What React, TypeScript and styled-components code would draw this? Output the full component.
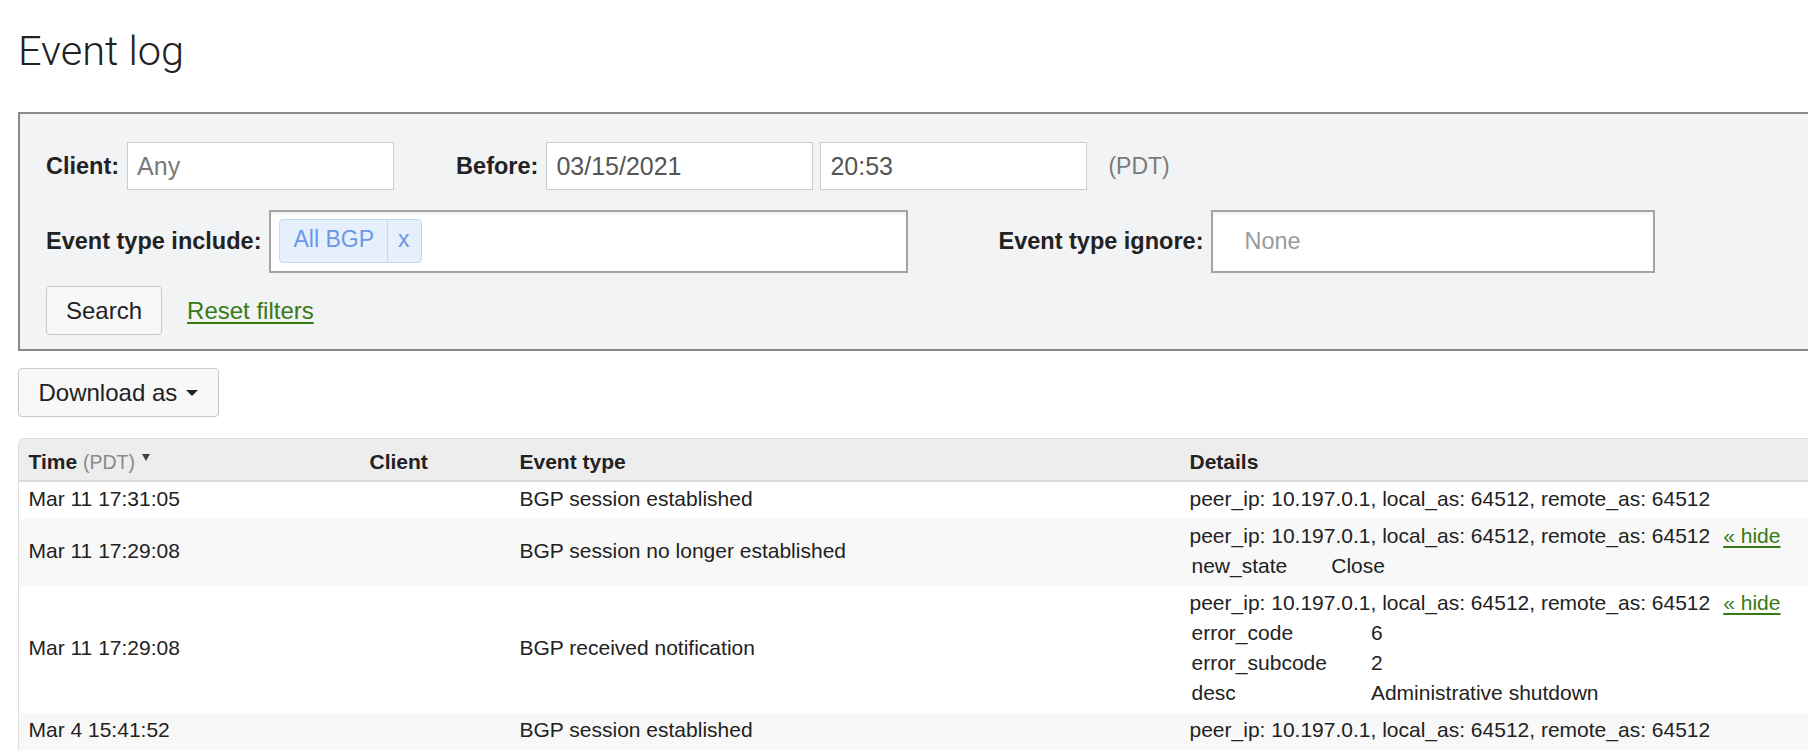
import React from "react"
import styled, { createGlobalStyle } from "styled-components"

interface KV {
  key: string
  value: string
}

interface EventRow {
  time: string
  client: string
  type: string
  details: string
  extra?: KV[]
}

const events: EventRow[] = [
  {
    time: "Mar 11 17:31:05",
    client: "",
    type: "BGP session established",
    details: "peer_ip: 10.197.0.1, local_as: 64512, remote_as: 64512",
  },
  {
    time: "Mar 11 17:29:08",
    client: "",
    type: "BGP session no longer established",
    details: "peer_ip: 10.197.0.1, local_as: 64512, remote_as: 64512",
    extra: [{ key: "new_state", value: "Close" }],
  },
  {
    time: "Mar 11 17:29:08",
    client: "",
    type: "BGP received notification",
    details: "peer_ip: 10.197.0.1, local_as: 64512, remote_as: 64512",
    extra: [
      { key: "error_code", value: "6" },
      { key: "error_subcode", value: "2" },
      { key: "desc", value: "Administrative shutdown" },
    ],
  },
  {
    time: "Mar 4 15:41:52",
    client: "",
    type: "BGP session established",
    details: "peer_ip: 10.197.0.1, local_as: 64512, remote_as: 64512",
  },
]

const App = () => {
  return (
    <>
      <GlobalStyle />
      <Page>
        <Title>Event log</Title>

        <FilterPanel>
          <FilterRow>
            <Label>Client:</Label>
            <TextInput placeholder="Any" readOnly />
            <Label $offset="62px">Before:</Label>
            <TextInput defaultValue="03/15/2021" readOnly />
            <TextInput defaultValue="20:53" readOnly $offset="7px" />
            <Muted>(PDT)</Muted>
          </FilterRow>

          <FilterRow $top="19.5px">
            <Label>Event type include:</Label>
            <TagBox $width="639px">
              <Tag>
                <TagLabel>All BGP</TagLabel>
                <TagRemove>x</TagRemove>
              </Tag>
            </TagBox>
            <Label $offset="90px">Event type ignore:</Label>
            <TagBox $width="444px">
              <Placeholder>None</Placeholder>
            </TagBox>
          </FilterRow>

          <FilterRow $top="13.5px">
            <Button>Search</Button>
            <GreenLink href="#">Reset filters</GreenLink>
          </FilterRow>
        </FilterPanel>

        <Button $top="17px" $pad="19.5px">
          Download as
          <Caret />
        </Button>

        <TableFrame>
          <Table>
            <colgroup>
              <col style={{ width: "341px" }} />
              <col style={{ width: "150px" }} />
              <col style={{ width: "670px" }} />
              <col />
            </colgroup>
            <thead>
              <tr>
                <Th>
                  Time <HeadNote>(PDT)</HeadNote>
                  <SortMark />
                </Th>
                <Th>Client</Th>
                <Th>Event type</Th>
                <Th>Details</Th>
              </tr>
            </thead>
            <tbody>
              {events.map((ev, i) => (
                <Tr key={i} $striped={i % 2 === 1}>
                  <Td>{ev.time}</Td>
                  <Td>{ev.client}</Td>
                  <Td>{ev.type}</Td>
                  <DetailTd>
                    <div>
                      {ev.details}
                      {ev.extra && <HideLink href="#">« hide</HideLink>}
                    </div>
                    {ev.extra && (
                      <KVTable>
                        <tbody>
                          {ev.extra.map(kv => (
                            <tr key={kv.key}>
                              <KeyCell>{kv.key}</KeyCell>
                              <ValueCell>{kv.value}</ValueCell>
                            </tr>
                          ))}
                        </tbody>
                      </KVTable>
                    )}
                  </DetailTd>
                </Tr>
              ))}
            </tbody>
          </Table>
        </TableFrame>
      </Page>
    </>
  )
}

export default App

const GlobalStyle = createGlobalStyle`
  html, body {
    margin: 0;
    padding: 0;
    background: #fff;
    overflow: hidden;
  }
  body {
    font-family: "Liberation Sans", Arial, Helvetica, sans-serif;
    font-size: 21px;
    line-height: 30px;
    color: #222;
  }
`

const Page = styled.div`
  width: 1840px;
  padding: 28px 0 0 18px;
  display: flex;
  flex-direction: column;
  align-items: flex-start;
`

const Title = styled.h1`
  margin: 0 0 38px;
  font-family: Roboto, "Liberation Sans", sans-serif;
  font-weight: 300;
  font-size: 41.5px;
  line-height: 46px;
  color: #222;
`

const FilterPanel = styled.div`
  align-self: stretch;
  background: #f2f3f5;
  border: 2px solid #8a8a8a;
  padding: 28px 26px 14px;
  display: flex;
  flex-direction: column;
  font-size: 24px;
`

interface RowProps {
  $top?: string
}
const FilterRow = styled.div<RowProps>`
  display: flex;
  align-items: center;
  margin-top: ${props => props.$top || "0"};
`

interface OffsetProps {
  $offset?: string
}
const Label = styled.label<OffsetProps>`
  font-weight: bold;
  font-size: 23.5px;
  margin-left: ${props => props.$offset || "0"};
  margin-right: 8px;
  white-space: nowrap;
`

const TextInput = styled.input<OffsetProps>`
  box-sizing: border-box;
  width: 267px;
  height: 48px;
  margin-left: ${props => props.$offset || "0"};
  padding: 0 9px;
  border: 1.5px solid #cccccc;
  border-radius: 0;
  background: #fff;
  font-family: inherit;
  font-size: 25px;
  color: #555;
  outline: none;

  &::placeholder {
    color: #7a7a7a;
  }
`

const Muted = styled.span`
  margin-left: 21px;
  font-size: 23px;
  color: #7a7a7a;
`

interface BoxProps {
  $width: string
}
const TagBox = styled.div<BoxProps>`
  box-sizing: border-box;
  width: ${props => props.$width};
  height: 63px;
  padding: 0 8px;
  display: flex;
  align-items: center;
  background: #fff;
  border: 2px solid #a3a3a3;
  box-shadow: inset 0 3px 4px -2px rgba(0, 0, 0, 0.08);
`

const Tag = styled.div`
  display: flex;
  align-items: stretch;
  height: 42px;
  line-height: 39px;
  font-size: 23px;
  background: #e6effc;
  border: 1.5px solid #c2d6f6;
  border-radius: 4px;
  color: #6b98e6;
`

const TagLabel = styled.span`
  padding: 0 13px;
`

const TagRemove = styled.span`
  padding: 0 11px 0 10px;
  border-left: 1.5px solid #c2d6f6;
`

const Placeholder = styled.span`
  padding-left: 23px;
  font-size: 23.5px;
  color: #9a9a9a;
`

interface ButtonProps {
  $top?: string
  $pad?: string
}
const Button = styled.button<ButtonProps>`
  box-sizing: border-box;
  height: 49px;
  margin-top: ${props => props.$top || "0"};
  padding: 0 ${props => props.$pad || "19px"};
  display: inline-flex;
  align-items: center;
  background: #f8f8f8;
  border: 1.5px solid #c8c8c8;
  border-radius: 4px;
  font-family: inherit;
  font-size: 24px;
  color: #222;
`

const Caret = styled.span`
  display: inline-block;
  width: 0;
  height: 0;
  margin-left: 9px;
  border-top: 6px solid #222;
  border-left: 6px solid transparent;
  border-right: 6px solid transparent;
`

const GreenLink = styled.a`
  margin-left: 25px;
  color: #377a14;
  text-decoration: underline;
  text-underline-offset: 3px;
`

const TableFrame = styled.div`
  align-self: stretch;
  margin-top: 21px;
  border-top: 1.5px solid #dddddd;
  border-left: 1.5px solid #dddddd;
  border-top-left-radius: 6px;
  overflow: hidden;
`

const Table = styled.table`
  width: 100%;
  border-collapse: collapse;
  table-layout: fixed;
`

const Th = styled.th`
  padding: 7.5px 9.5px 3.5px;
  background: #ededed;
  border-bottom: 2px solid #dcdcdc;
  text-align: left;
  font-weight: bold;
  white-space: nowrap;
`

const HeadNote = styled.span`
  font-weight: normal;
  font-size: 19.5px;
  color: #8a8a8a;
`

const SortMark = styled.span`
  display: inline-block;
  vertical-align: top;
  width: 0;
  height: 0;
  margin: 7px 0 0 7px;
  border-top: 7px solid #444;
  border-left: 4px solid transparent;
  border-right: 4px solid transparent;
`

interface TrProps {
  $striped: boolean
}
const Tr = styled.tr<TrProps>`
  background: ${props => (props.$striped ? "#f8f8f8" : "#ffffff")};
`

const Td = styled.td`
  padding: 2px 9.5px 5px;
  vertical-align: middle;
  white-space: nowrap;
`

const DetailTd = styled(Td)`
  vertical-align: top;
`

const HideLink = styled.a`
  margin-left: 13px;
  color: #377a14;
  text-decoration: underline;
  text-underline-offset: 3px;
`

const KVTable = styled.table`
  border-collapse: collapse;
`

const KeyCell = styled.td`
  padding: 0 42px 0 2px;
`

const ValueCell = styled.td`
  padding: 0 2px;
`
